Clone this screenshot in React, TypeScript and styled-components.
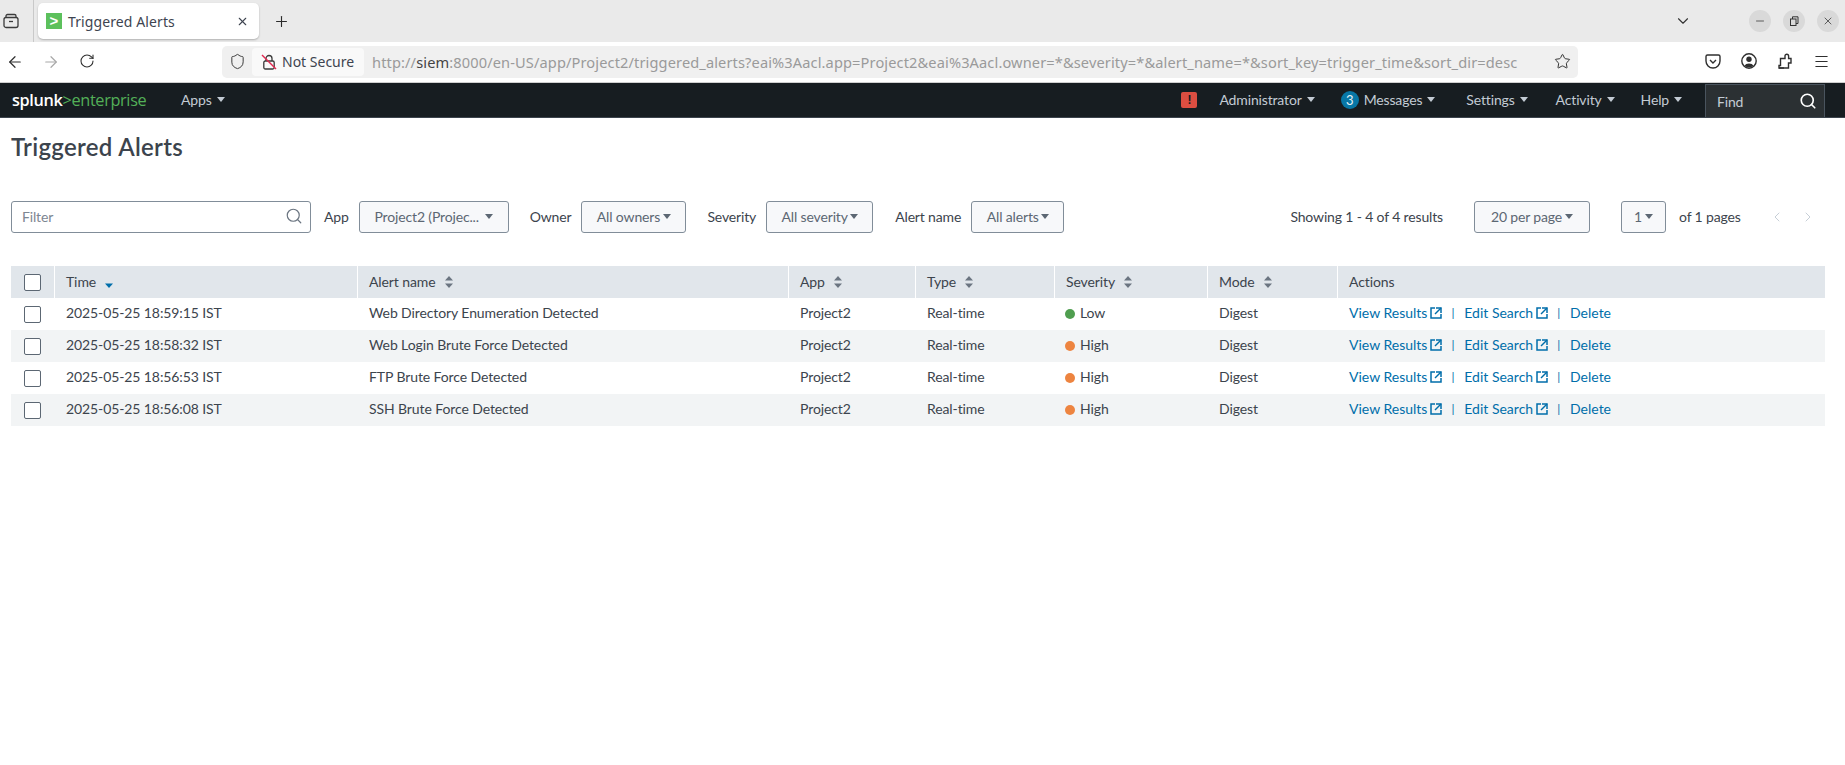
import styled, { createGlobalStyle } from "styled-components";
import {
  ArrowLeft,
  ArrowRight,
  ChevronDown,
  ChevronLeft,
  ChevronRight,
  Menu,
  Minus,
  Plus,
  RotateCw,
  Search,
  Shield,
  Star,
  X,
} from "lucide-react";

const GlobalStyle = createGlobalStyle`
  html, body {
    margin: 0;
    padding: 0;
    background: #fff;
    font-family: "Lato", "Liberation Sans", sans-serif;
    color: #3c444d;
  }
  * { box-sizing: border-box; }
`;

const Page = styled.div`
  width: 1845px;
  height: 765px;
  overflow: hidden;
  display: flex;
  flex-direction: column;
`;

/* browser chrome */
const TabStrip = styled.div`
  height: 42px;
  background: #eaeaea;
  display: flex;
  align-items: center;
  padding-right: 6px;
`;

const TabListButton = styled.div`
  width: 34px;
  height: 42px;
  display: flex;
  align-items: center;
  padding-left: 3px;
  border-right: 1px solid #c9c9c9;
  color: #3b3b3b;
`;

const Tab = styled.div`
  width: 221px;
  height: 36px;
  margin-left: 4px;
  background: #fff;
  border-radius: 5px;
  box-shadow: 0 1px 2px rgba(0, 0, 0, 0.25);
  display: flex;
  align-items: center;
  padding: 0 10px 0 8px;
  font-family: "Noto Sans", sans-serif;
  font-size: 14px;
  color: #3e4450;
`;

const Favicon = styled.div`
  width: 16px;
  height: 16px;
  background: #5cc05c;
  color: #fff;
  font: 700 15px/16px "Liberation Sans", sans-serif;
  text-align: center;
  margin-right: 6px;
`;

const TabTitle = styled.span`
  flex: 1;
  letter-spacing: 0.1px;
`;

const NewTab = styled.div`
  margin-left: 14px;
  display: flex;
  color: #2b2b2b;
`;

const WindowControls = styled.div`
  margin-left: auto;
  display: flex;
  align-items: center;
  gap: 12px;
  color: #333;
`;

const TabsMenu = styled.div`
  display: flex;
  margin-right: 45px;
  color: #333;
`;

const WindowButton = styled.div`
  width: 22px;
  height: 22px;
  border-radius: 50%;
  background: #d9d9d9;
  display: flex;
  align-items: center;
  justify-content: center;
`;

const Toolbar = styled.div`
  height: 41px;
  background: #fff;
  border-bottom: 1px solid #cfcfcf;
  display: flex;
  align-items: center;
  padding-bottom: 1px;
`;

const NavButtons = styled.div`
  display: flex;
  gap: 6px;
  width: 222px;
  color: #2f2f2f;
`;

const ToolIcon = styled.div<{ $dim?: boolean }>`
  width: 30px;
  display: flex;
  justify-content: center;
  color: ${(p) => (p.$dim ? "#a8a8a8" : "#2f2f2f")};
`;

const UrlBar = styled.div`
  width: 1356px;
  height: 32px;
  background: #f0f0f0;
  border-radius: 5px;
  display: flex;
  align-items: center;
  padding-right: 7px;
  font-family: "Noto Sans", sans-serif;
  font-size: 14px;
`;

const ShieldSlot = styled.div`
  width: 30px;
  display: flex;
  justify-content: center;
  color: #3a3a3a;
`;

const NotSecure = styled.div`
  width: 112px;
  height: 28px;
  background: #f9f9f9;
  border-radius: 4px;
  display: flex;
  align-items: center;
  padding-left: 9px;
  gap: 5px;
  color: #3e4450;
  white-space: nowrap;
`;

const UrlText = styled.div`
  margin-left: 8px;
  flex: 1;
  color: #9a9a9a;
  white-space: nowrap;
  font-size: 14.6px;
  letter-spacing: 0.12px;
  b {
    font-weight: 400;
    color: #444;
  }
`;

const ToolbarRight = styled.div`
  display: flex;
  margin-left: 120px;
  gap: 6px;
`;

/* splunk bar */
const NavBar = styled.div`
  height: 35px;
  background: #171d21;
  border-bottom: 1px solid #3c444d;
  display: flex;
  align-items: center;
  padding: 0 20px 1px 12px;
  color: #c3cbd4;
  font-size: 14px;
  letter-spacing: -0.15px;
`;

const Logo = styled.div`
  width: 169px;
  font-family: "Open Sans", sans-serif;
  font-size: 16.3px;
  letter-spacing: -0.35px;
  color: #fff;
  font-weight: 600;
  span {
    color: #53b058;
    font-weight: 400;
  }
`;

const NavItem = styled.div<{ $gap?: number }>`
  display: flex;
  align-items: center;
  gap: 5px;
  margin-right: ${(p) => p.$gap ?? 0}px;
  white-space: nowrap;
`;

const Caret = styled.span<{ $dark?: boolean }>`
  display: inline-block;
  width: 0;
  height: 0;
  border-left: 4px solid transparent;
  border-right: 4px solid transparent;
  border-top: 5px solid ${(p) => (p.$dark ? "#5c6773" : "#c3cbd4")};
`;

const NavRight = styled.div`
  margin-left: auto;
  display: flex;
  align-items: center;
`;

const AlertBadge = styled.div`
  width: 16px;
  height: 16px;
  background: #dc4e41;
  border-radius: 2px;
  color: #171d21;
  font: 700 12px/16px "Liberation Sans", sans-serif;
  text-align: center;
  margin-right: 22px;
`;

const MessageCount = styled.span`
  width: 18px;
  height: 18px;
  border-radius: 50%;
  background: #0877a6;
  color: #e6f1f6;
  font-size: 13px;
  line-height: 18px;
  text-align: center;
`;

const FindBox = styled.div`
  width: 120px;
  height: 33px;
  background: #2b3033;
  border: 1px solid #4a545e;
  border-bottom: none;
  display: flex;
  align-items: center;
  justify-content: space-between;
  padding: 0 7px 0 11px;
  color: #c3cbd4;
  margin-top: 2px;
`;

/* content */
const Content = styled.main`
  padding: 0 20px 0 11px;
`;

const Title = styled.h1`
  margin: 15px 0 0;
  height: 29px;
  font-size: 24px;
  line-height: 28px;
  font-weight: 600;
  letter-spacing: 0.3px;
  color: #3c444d;
`;

const FilterBar = styled.div`
  margin-top: 39px;
  height: 32px;
  display: flex;
  align-items: center;
  font-size: 14px;
  letter-spacing: -0.15px;
`;

const FilterInput = styled.div`
  width: 300px;
  height: 32px;
  border: 1px solid #818d99;
  border-radius: 3px;
  display: flex;
  align-items: center;
  justify-content: space-between;
  padding: 0 7px 2px 10px;
  color: #7d8692;
`;

const Label = styled.span<{ $left: number }>`
  margin-left: ${(p) => p.$left}px;
  margin-right: 10px;
  padding-bottom: 2px;
  white-space: nowrap;
`;

const Select = styled.div<{ $width: number; $left?: number; $gap?: number }>`
  width: ${(p) => p.$width}px;
  height: 32px;
  margin-left: ${(p) => p.$left ?? 0}px;
  padding-bottom: 2px;
  background: #f7f8fa;
  border: 1px solid #818d99;
  border-radius: 3px;
  display: flex;
  align-items: center;
  justify-content: center;
  gap: ${(p) => p.$gap ?? 4}px;
  color: #5c6773;
  white-space: nowrap;
`;

const ResultCount = styled.span`
  margin-left: auto;
  margin-right: 31px;
  padding-bottom: 2px;
`;

const PageOf = styled.span`
  margin-left: 13px;
  width: 90px;
  padding-bottom: 2px;
`;

const Pager = styled.div`
  display: flex;
  gap: 15px;
  margin-right: 9px;
  color: #c3cbd4;
`;

const Table = styled.div`
  margin-top: 33px;
  font-size: 14px;
  letter-spacing: -0.1px;
`;

const Row = styled.div<{ $alt?: boolean }>`
  display: grid;
  grid-template-columns: 43px 303px 431px 127px 139px 153px 130px 488px;
  height: 32px;
  align-items: center;
  background: ${(p) => (p.$alt ? "#f2f4f5" : "#fff")};
`;

const HeadRow = styled(Row)`
  background: #e1e6eb;
`;

const HeadCell = styled.div`
  height: 32px;
  padding: 0 12px 2px 11px;
  display: flex;
  align-items: center;
  gap: 9px;
  border-left: 1px solid #fff;
`;

const SortGlyph = styled.span`
  display: flex;
  margin-top: 2px;
`;

const Cell = styled.div`
  padding: 0 12px 3px;
  display: flex;
  align-items: center;
  white-space: nowrap;
`;

const CheckCell = styled.div`
  display: flex;
  justify-content: center;
`;

const Checkbox = styled.div`
  width: 17px;
  height: 17px;
  background: #fff;
  border: 1px solid #5c6773;
  border-radius: 2px;
`;

const Dot = styled.span<{ $color: string }>`
  width: 10px;
  height: 10px;
  border-radius: 50%;
  background: ${(p) => p.$color};
  margin: 3px 5px 0 -1px;
`;

const ActionLink = styled.a`
  color: #006eaa;
  display: inline-flex;
  align-items: center;
  gap: 3px;
  letter-spacing: 0;
`;

const Sep = styled.span`
  color: #006eaa;
  font-size: 12px;
  margin: 0 10px 0 9px;
`;

const SortIcon = ({ active }: { active?: boolean }) => (
  <SortGlyph>
    <svg width="8" height="12" viewBox="0 0 8 12">
      {!active && <path d="M4 0 L8 4.5 H0 Z" fill="#6b7581" />}
      <path d="M4 12 L8 7.5 H0 Z" fill={active ? "#006eaa" : "#6b7581"} />
    </svg>
  </SortGlyph>
);

const LinkIcon = () => (
  <svg width="12" height="12" viewBox="0 0 12 12" fill="none" stroke="#006eaa" strokeWidth="1.5">
    <path d="M5 1H1V11H11V7" />
    <path d="M6 1H11V6" />
    <path d="M11 1L5 7" />
  </svg>
);

const TabListIcon = () => (
  <svg width="16" height="16" viewBox="0 0 16 16" fill="none" stroke="currentColor" strokeWidth="1.3">
    <rect x="1" y="4.5" width="14" height="10" rx="2" />
    <path d="M3 4.5V3a1.5 1.5 0 0 1 1.5-1.5h7A1.5 1.5 0 0 1 13 3v1.5" />
    <path d="M6 8.5h4" />
  </svg>
);

const CrossedLock = () => (
  <svg width="16" height="16" viewBox="0 0 16 16" fill="none">
    <path d="M5 7V4.5a3 3 0 0 1 6 0V7" stroke="#3a3a3a" strokeWidth="1.3" />
    <rect x="2.8" y="7" width="10.4" height="8" rx="1.5" stroke="#3a3a3a" strokeWidth="1.3" />
    <path d="M1 1L15 15" stroke="#e22850" strokeWidth="1.4" />
  </svg>
);

const PocketIcon = () => (
  <svg width="16" height="16" viewBox="0 0 16 16" fill="none" stroke="#2f2f2f" strokeWidth="1.4">
    <path d="M2.5 2h11A1.5 1.5 0 0 1 15 3.5V8a7 7 0 0 1-14 0V3.5A1.5 1.5 0 0 1 2.5 2Z" />
    <path d="M5 7l3 3 3-3" />
  </svg>
);

const AccountIcon = () => (
  <svg width="16" height="16" viewBox="0 0 16 16">
    <circle cx="8" cy="8" r="7.2" fill="none" stroke="#2f2f2f" strokeWidth="1.4" />
    <circle cx="8" cy="6.2" r="2.7" fill="#2f2f2f" />
    <path d="M3.4 12.8a5 3.6 0 0 1 9.2 0A7 7 0 0 1 3.4 12.8Z" fill="#2f2f2f" />
  </svg>
);

const ExtensionsIcon = () => (
  <svg width="16" height="16" viewBox="0 0 16 16" fill="none" stroke="#2f2f2f" strokeWidth="1.4">
    <path d="M2 15V12.5H3.5V5.5H8V3a1.8 1.8 0 0 1 3.6 0V5.5H14V10H11.5V15Z" />
    <path d="M2 15H7" />
  </svg>
);

const RestoreIcon = () => (
  <svg width="10" height="10" viewBox="0 0 10 10" fill="none" stroke="#333" strokeWidth="1">
    <rect x="1.5" y="3" width="5.5" height="6.5" />
    <path d="M3.5 3V0.8H9V7.5H7" />
  </svg>
);

type Alert = {
  time: string;
  name: string;
  severity: string;
  color: string;
};

const alerts: Alert[] = [
  { time: "2025-05-25 18:59:15 IST", name: "Web Directory Enumeration Detected", severity: "Low", color: "#4f9e4f" },
  { time: "2025-05-25 18:58:32 IST", name: "Web Login Brute Force Detected", severity: "High", color: "#ed8440" },
  { time: "2025-05-25 18:56:53 IST", name: "FTP Brute Force Detected", severity: "High", color: "#ed8440" },
  { time: "2025-05-25 18:56:08 IST", name: "SSH Brute Force Detected", severity: "High", color: "#ed8440" },
];

const headers = ["Alert name", "App", "Type", "Severity", "Mode"];

const App = () => {
  return (
    <Page>
      <GlobalStyle />
      <TabStrip>
        <TabListButton>
          <TabListIcon />
        </TabListButton>
        <Tab>
          <Favicon>&gt;</Favicon>
          <TabTitle>Triggered Alerts</TabTitle>
          <X size={13} strokeWidth={2} />
        </Tab>
        <NewTab>
          <Plus size={17} strokeWidth={1.6} />
        </NewTab>
        <WindowControls>
          <TabsMenu>
            <ChevronDown size={18} strokeWidth={1.5} />
          </TabsMenu>
          <WindowButton>
            <Minus size={12} strokeWidth={1.5} />
          </WindowButton>
          <WindowButton>
            <RestoreIcon />
          </WindowButton>
          <WindowButton>
            <X size={12} strokeWidth={1.5} />
          </WindowButton>
        </WindowControls>
      </TabStrip>

      <Toolbar>
        <NavButtons>
          <ToolIcon>
            <ArrowLeft size={18} strokeWidth={1.6} />
          </ToolIcon>
          <ToolIcon $dim>
            <ArrowRight size={18} strokeWidth={1.6} />
          </ToolIcon>
          <ToolIcon>
            <RotateCw size={16} strokeWidth={1.6} />
          </ToolIcon>
        </NavButtons>
        <UrlBar>
          <ShieldSlot>
            <Shield size={17} strokeWidth={1.4} />
          </ShieldSlot>
          <NotSecure>
            <CrossedLock />
            Not Secure
          </NotSecure>
          <UrlText>
            http://<b>siem</b>:8000/en-US/app/Project2/triggered_alerts?eai%3Aacl.app=Project2&amp;eai%3Aacl.owner=*&amp;severity=*&amp;alert_name=*&amp;sort_key=trigger_time&amp;sort_dir=desc
          </UrlText>
          <Star size={17} strokeWidth={1.4} color="#333" />
        </UrlBar>
        <ToolbarRight>
          <ToolIcon>
            <PocketIcon />
          </ToolIcon>
          <ToolIcon>
            <AccountIcon />
          </ToolIcon>
          <ToolIcon>
            <ExtensionsIcon />
          </ToolIcon>
          <ToolIcon>
            <Menu size={17} strokeWidth={1.5} />
          </ToolIcon>
        </ToolbarRight>
      </Toolbar>

      <NavBar>
        <Logo>
          splunk<span>&gt;enterprise</span>
        </Logo>
        <NavItem>
          Apps <Caret />
        </NavItem>
        <NavRight>
          <AlertBadge>!</AlertBadge>
          <NavItem $gap={26}>
            Administrator <Caret />
          </NavItem>
          <NavItem $gap={31}>
            <MessageCount>3</MessageCount>
            Messages <Caret />
          </NavItem>
          <NavItem $gap={28}>
            Settings <Caret />
          </NavItem>
          <NavItem $gap={26}>
            Activity <Caret />
          </NavItem>
          <NavItem $gap={23}>
            Help <Caret />
          </NavItem>
          <FindBox>
            Find
            <Search size={18} strokeWidth={2.2} color="#fff" />
          </FindBox>
        </NavRight>
      </NavBar>

      <Content>
        <Title>Triggered Alerts</Title>
        <FilterBar>
          <FilterInput>
            Filter
            <Search size={18} strokeWidth={1.6} color="#6b7581" />
          </FilterInput>
          <Label $left={13}>App</Label>
          <Select $width={150} $gap={6}>
            Project2 (Projec... <Caret $dark />
          </Select>
          <Label $left={21}>Owner</Label>
          <Select $width={105} $gap={3}>
            All owners <Caret $dark />
          </Select>
          <Label $left={21}>Severity</Label>
          <Select $width={107} $gap={2}>
            All severity <Caret $dark />
          </Select>
          <Label $left={22}>Alert name</Label>
          <Select $width={93} $gap={2}>
            All alerts <Caret $dark />
          </Select>
          <ResultCount>Showing 1 - 4 of 4 results</ResultCount>
          <Select $width={116} $gap={3}>
            20 per page <Caret $dark />
          </Select>
          <Select $width={45} $left={31} $gap={3}>
            1 <Caret $dark />
          </Select>
          <PageOf>of 1 pages</PageOf>
          <Pager>
            <ChevronLeft size={16} strokeWidth={1.4} />
            <ChevronRight size={16} strokeWidth={1.4} />
          </Pager>
        </FilterBar>

        <Table>
          <HeadRow>
            <CheckCell>
              <Checkbox />
            </CheckCell>
            <HeadCell>
              Time <SortIcon active />
            </HeadCell>
            {headers.map((h) => (
              <HeadCell key={h}>
                {h} <SortIcon />
              </HeadCell>
            ))}
            <HeadCell>Actions</HeadCell>
          </HeadRow>
          {alerts.map((alert, i) => (
            <Row key={alert.time} $alt={i % 2 === 1}>
              <CheckCell>
                <Checkbox />
              </CheckCell>
              <Cell>{alert.time}</Cell>
              <Cell>{alert.name}</Cell>
              <Cell>Project2</Cell>
              <Cell>Real-time</Cell>
              <Cell>
                <Dot $color={alert.color} />
                {alert.severity}
              </Cell>
              <Cell>Digest</Cell>
              <Cell>
                <ActionLink>
                  View Results <LinkIcon />
                </ActionLink>
                <Sep>|</Sep>
                <ActionLink>
                  Edit Search <LinkIcon />
                </ActionLink>
                <Sep>|</Sep>
                <ActionLink>Delete</ActionLink>
              </Cell>
            </Row>
          ))}
        </Table>
      </Content>
    </Page>
  );
};

export default App;
